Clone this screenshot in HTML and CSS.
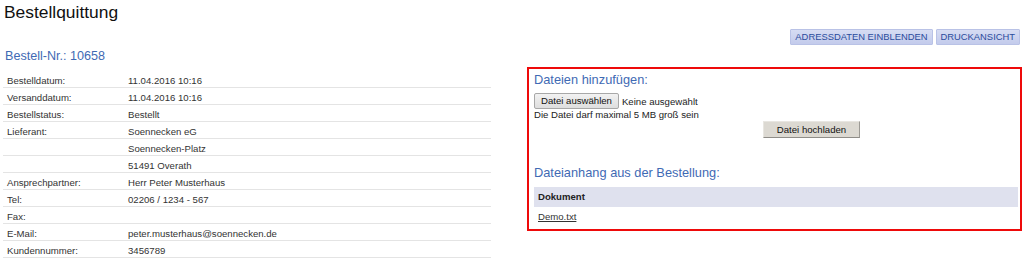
FILE: index.html
```html
<!DOCTYPE html>
<html lang="de">
<head>
<meta charset="utf-8">
<title>Bestellquittung</title>
<link rel="stylesheet" href="styles.css">
</head>
<body>
<div class="page">
  <h1 class="title">Bestellquittung</h1>
  <div class="toolbar">
    <button class="tbtn" type="button">Adressdaten einblenden</button>
    <button class="tbtn" type="button">Druckansicht</button>
  </div>
  <h2 class="ordno">Bestell-Nr.: 10658</h2>
  <div class="cols">
    <table class="details">
      <colgroup><col class="c-label"><col></colgroup>
      <tbody>
        <tr><td>Bestelldatum:</td><td>11.04.2016 10:16</td></tr>
        <tr><td>Versanddatum:</td><td>11.04.2016 10:16</td></tr>
        <tr><td>Bestellstatus:</td><td>Bestellt</td></tr>
        <tr><td>Lieferant:</td><td>Soennecken eG</td></tr>
        <tr><td></td><td>Soennecken-Platz</td></tr>
        <tr><td></td><td>51491 Overath</td></tr>
        <tr><td>Ansprechpartner:</td><td>Herr Peter Musterhaus</td></tr>
        <tr><td>Tel:</td><td>02206 / 1234 - 567</td></tr>
        <tr><td>Fax:</td><td></td></tr>
        <tr><td>E-Mail:</td><td>peter.musterhaus@soennecken.de</td></tr>
        <tr><td>Kundennummer:</td><td>3456789</td></tr>
      </tbody>
    </table>
    <div class="files">
      <h3 class="sub">Dateien hinzufügen:</h3>
      <div class="picker">
        <button class="choose" type="button">Datei auswählen</button>
        <span class="none">Keine ausgewählt</span>
      </div>
      <p class="hint">Die Datei darf maximal 5 MB groß sein</p>
      <button class="upload" type="button">Datei hochladen</button>
      <h3 class="sub sub2">Dateianhang aus der Bestellung:</h3>
      <table class="docs">
        <thead><tr><th>Dokument</th></tr></thead>
        <tbody><tr><td><a href="#" class="doclink">Demo.txt</a></td></tr></tbody>
      </table>
    </div>
  </div>
</div>
</body>
</html>
```
FILE: styles.css
```css
* { box-sizing: border-box; }
html, body { margin: 0; padding: 0; background: #fff; }
body { font-family: "Liberation Sans", Arial, sans-serif; color: #333; }

.page { padding: 2px 2px 0 3px; width: 1024px; }

.title {
  margin: 0 0 0 1px;
  font-size: 17.4px;
  line-height: 21px;
  font-weight: normal;
  color: #111;
}

.toolbar {
  display: flex;
  justify-content: flex-end;
  gap: 3px;
  margin-top: 6px;
  padding-right: 2px;
}
.tbtn {
  height: 16px;
  padding: 0 4px;
  font-family: "Liberation Sans", Arial, sans-serif;
  font-size: 9.4px;
  line-height: 14px;
  text-transform: uppercase;
  color: #2b4c9c;
  background: linear-gradient(#d6dcf3, #c3cbec);
  border: 1px solid #b9c2e6;
  border-radius: 1px;
}

.ordno {
  margin: 4px 0 0 2px;
  font-size: 12.6px;
  line-height: 15px;
  font-weight: normal;
  color: #3f6ab4;
}

.cols {
  display: grid;
  grid-template-columns: 488px 1fr;
  column-gap: 36px;
  align-items: start;
  margin-top: 3px;
}

.details {
  margin-top: 3px;
  width: 488px;
  border-collapse: collapse;
  table-layout: fixed;
  font-size: 9.6px;
  color: #333;
}
.c-label { width: 121px; }
.details td {
  height: 17px;
  padding: 0 4px;
  line-height: 12px;
  vertical-align: bottom;
  border-bottom: 1px solid #e4e4e4;
  white-space: nowrap;
}

.files {
  border: 2px solid #ee0a0a;
  padding: 3px 2px 2px 5px;
}
.sub {
  margin: 0;
  font-size: 12.8px;
  line-height: 15px;
  font-weight: normal;
  color: #3f6ab4;
}
.picker {
  display: flex;
  align-items: center;
  gap: 3px;
  margin-top: 6px;
  font-size: 9.6px;
  color: #222;
}
.choose {
  height: 16px;
  padding: 0 6px;
  font-family: "Liberation Sans", Arial, sans-serif;
  font-size: 9.6px;
  line-height: 14px;
  color: #111;
  background: linear-gradient(#f2f2f2, #dedede);
  border: 1px solid #a8a8a8;
  border-radius: 2px;
}
.hint {
  margin: 0;
  font-size: 9.6px;
  line-height: 11.5px;
  color: #222;
}
.upload {
  display: block;
  width: 97px;
  height: 17px;
  margin: 0 0 0 229px;
  padding: 0;
  font-family: "Liberation Sans", Arial, sans-serif;
  font-size: 9.6px;
  line-height: 15px;
  color: #111;
  background: #dcd9d2;
  border: 1px solid;
  border-color: #e8e6e1 #9c9a95 #8f8d88 #e8e6e1;
}
.sub2 { margin-top: 27px; }

.docs {
  width: 100%;
  margin-top: 7px;
  border-collapse: collapse;
  font-size: 9.6px;
}
.docs th {
  height: 20px;
  padding: 0 4px;
  text-align: left;
  font-weight: bold;
  color: #222;
  background: #dfe1ee;
}
.docs td {
  height: 20px;
  padding: 0 4px;
}
.doclink { color: #333; text-decoration: underline; }
```
